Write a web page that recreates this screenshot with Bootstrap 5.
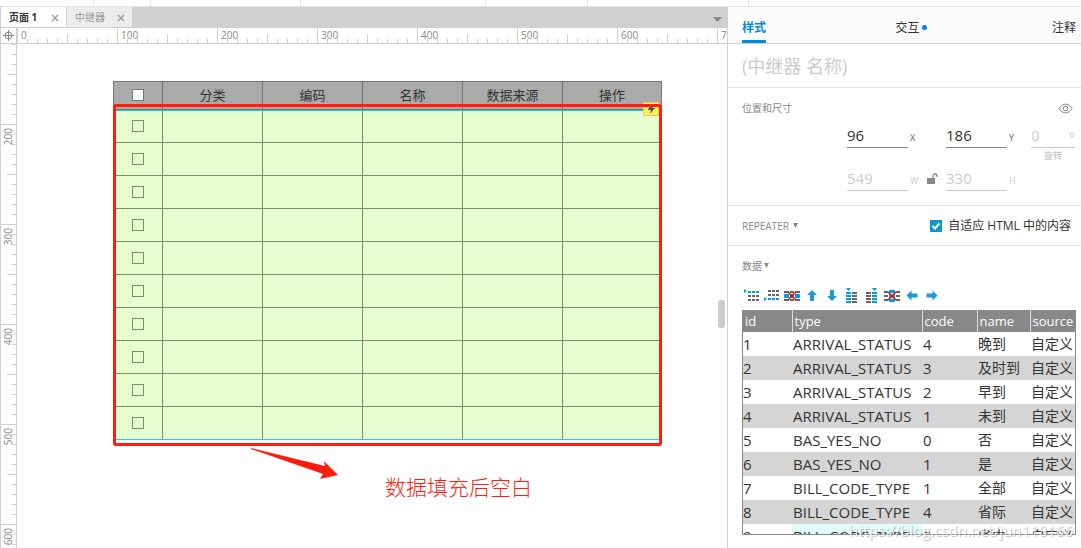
<!DOCTYPE html>
<html lang="zh-CN">
<head>
<meta charset="utf-8">
<meta name="viewport" content="width=device-width, initial-scale=1">
<title>页面 1</title>
<link href="https://cdn.jsdelivr.net/npm/bootstrap@5.3.0/dist/css/bootstrap.min.css" rel="stylesheet">
<script src="https://cdn.jsdelivr.net/npm/bootstrap@5.3.0/dist/js/bootstrap.bundle.min.js" defer></script>
<style>
  :root { --rule: #d0d0d0; --soft: #e5e5e5; --accent: #0089dd; --pen: #ff1d12; }
  body { font-family: "Open Sans", "Noto Sans CJK SC", sans-serif; font-size: 12px; line-height: 16px; color: #333; background: #fff; }
  input[type=checkbox] { appearance: none; display: block; margin: 0; border-radius: 0; }
  input::placeholder { color: #ccc; }

  .toolstrip { height: 7px; border-bottom: 1px solid var(--soft); }
  .toolstrip span { border-right: 1px solid var(--soft); }
  .g1 { width: 94px; } .g2 { width: 57px; } .g3 { width: 150px; } .g4 { width: 185px; } .g5 { width: 102px; } .g6 { width: 161px; }

  .doc-tabs { height: 21px; background: var(--rule); padding-left: 1px; }
  .doc-tab { width: 66px; height: 20px; padding: 0 6px 0 8px; font-size: 10px; border-right: 1px solid var(--rule); background: #ececec; color: #999; }
  .doc-tab.active { background: #fff; color: #333; font-weight: 700; }
  .doc-tab button, .tab-menu { line-height: 0; }
  .tab-menu { width: 20px; padding-top: 4px; }

  .ruler-row { height: 16px; border-bottom: 1px solid var(--rule); }
  .origin { width: 17px; border: solid var(--rule); border-width: 0 1px; }
  .hruler, .vruler { font-size: 10px; line-height: 15px; color: #888; }
  .hseg { flex: 0 0 100px; padding-left: 4px;
    background:
      linear-gradient(var(--rule), var(--rule)) 0 0 / 1px 100% no-repeat,
      linear-gradient(var(--rule), var(--rule)) 50px 100% / 1px 9px no-repeat,
      repeating-linear-gradient(90deg, var(--rule) 0 1px, transparent 1px 10px) 0 100% / 100% 4px no-repeat; }
  .vruler { width: 17px; border: solid var(--rule); border-width: 0 1px; }
  .vseg { flex: 0 0 100px; padding-top: 4px;
    background:
      linear-gradient(var(--rule), var(--rule)) 0 0 / 100% 1px no-repeat,
      linear-gradient(var(--rule), var(--rule)) 100% 50px / 9px 1px no-repeat,
      repeating-linear-gradient(var(--rule) 0 1px, transparent 1px 10px) 100% 0 / 4px 100% no-repeat; }
  .vseg.first { flex-basis: 80px; background-position: 0 -20px, 100% 30px, 100% 0; }
  .vseg span { display: block; writing-mode: vertical-rl; transform: rotate(180deg); width: 15px; }

  .stage { padding: 37px 0 0 96px; }
  .widget { width: 549px; height: 365px; }
  .grid-table { width: 549px; table-layout: fixed; border-collapse: collapse; font-size: 13px; }
  .grid-table th { height: 28px; padding: 0 0 2px; background: #aaa; border: 1px solid #777; font-weight: 400; text-align: center; }
  .grid-table td { height: 33px; padding: 0; background: #e5fdcf; border: 1px solid #7a9165; }
  .grid-table tbody tr:first-child td { border-top-color: #777; box-shadow: inset 0 1px #00d8e0; }
  .grid-table tbody tr:last-child td { border-bottom-color: #20d0d8; }
  .grid-table input { width: 12px; height: 12px; margin: 0 auto; border: 1px solid #7a9165; }
  .grid-table th input { border-color: #777; background: #fff; }
  .col-check { width: 49px; } .col-data { width: 100px; }
  .marker { inset: 23px 0 0 0; border: 3px solid var(--pen); border-radius: 3px; }
  .event-flag { top: 21px; right: 3px; line-height: 0; }
  .note { padding-left: 137px; }
  .note-text { color: var(--pen); font-size: 21px; line-height: 32px; font-weight: 300; margin: 25px 0 0 46px; }
  .grip { right: 2px; top: 293px; width: 7px; height: 28px; border-radius: 3px; background: #ccc; }

  .inspector { flex: 0 0 354px; border-left: 1px solid var(--rule); }
  .side-tabs { height: 37px; padding: 0 5px 0 14px; background: #fbfbfb; border-bottom: 1px solid var(--rule); }
  .side-tabs a { color: #333; text-decoration: none; padding-top: 13px; border-bottom: 3px solid transparent; }
  .side-tabs a.active { color: var(--accent); font-weight: 700; border-color: var(--accent); }
  .dot { width: 5px; height: 5px; background: var(--accent); margin: 5px 0 0 2px; }
  .name-row { height: 44px; padding: 0 14px; border-bottom: 1px solid var(--soft); }
  .name-row input { border: 0; outline: 0; padding: 0; font-size: 18px; }
  .sect { padding: 0 6px 0 14px; border-bottom: 1px solid var(--soft); color: #888; font-size: 10px; }
  .geometry { height: 118px; padding-top: 12px; }
  .eye { margin-right: 2px; }
  .fields { display: grid; grid-template-columns: 61px 38px 61px 24px 44px; justify-content: end; }
  .fields input { width: 100%; height: 24px; padding: 0 0 2px; border: 0; border-bottom: 1px solid #888; border-radius: 0; font-size: 15px; color: #333; outline: 0; background: none; }
  .fields input:disabled { color: #ccc; border-color: #ccc; }
  .fields label { font-size: 9px; padding: 6px 0 0 2px; color: #666; }
  .fields .off { color: #ccc; }
  .unit { right: 0; top: 6px; font-size: 14px; color: #ccc; }
  .fields .spin { grid-column: 5; height: 19px; padding: 0; color: #bbb; }
  .repeater { height: 40px; }
  .toggle { background: none; border: 0; padding: 0; color: #888; font-size: 10px; line-height: 14px; }
  .toggle svg { margin-left: 2px; vertical-align: 2px; }
  .fit input { width: 12px; height: 12px; background: #0b9ac3 url("data:image/svg+xml,%3Csvg xmlns='http://www.w3.org/2000/svg' viewBox='0 0 12 12'%3E%3Cpath d='M2.5 6l2.5 2.5 4.500-5' fill='none' stroke='%23fff' stroke-width='2'/%3E%3C/svg%3E"); margin-right: 6px; }
  .fit { font-size: 12px; color: #333; margin-right: 4px; }
  .data-tools { padding: 15px 2px 6px; gap: 4px; }
  .data-tools button { width: 16px; height: 16px; padding: 0; border: 0; background: none; line-height: 0; }
  .data-sect { padding: 13px 5px 0 14px; }
  .data-box { height: 225px; border: 1px solid #888; border-top: 0; }
  .data-table { width: 100%; table-layout: fixed; border-collapse: collapse; font-size: 15px; line-height: 24px; white-space: nowrap; }
  .data-table th { height: 22px; padding: 0 0 0 2px; background: #888; color: #fff; font-weight: 400; font-size: 13px; line-height: 22px; border-left: 1px solid #ddd; }
  .data-table th:first-child { border-left: 0; }
  .data-table td { height: 24px; padding: 0 0 0 1px; }
  .data-table td:first-child { padding-left: 0; }
  .data-table td:nth-child(n+4) { font-size: 14px; }
  .data-table tbody tr:nth-child(even) { background: #d5d5d5; }
  .data-table .picked { background: #e0fcfc; }
  .w-id { width: 49px; } .w-type { width: 130px; } .w-code { width: 55px; } .w-name { width: 53px; }
  .watermark { right: 8px; bottom: 8px; font-size: 15px; line-height: 20px; color: rgba(255,255,255,.75); text-shadow: 1px 1px 1px rgba(120,120,120,.5); }
</style>
</head>
<body>
<svg class="d-none">
  <defs>
    <path id="up" d="M8 2l5 5h-3v6H6V7H3z"/>
  </defs>
</svg>
<div class="vh-100 d-flex flex-column overflow-hidden">
  <div class="toolstrip d-flex flex-shrink-0"><span class="g1"></span><span class="g2"></span><span class="g3"></span><span class="g4"></span><span class="g5"></span><span class="g6"></span></div>
  <div class="d-flex flex-grow-1 overflow-hidden">

    <main class="d-flex flex-column flex-grow-1 overflow-hidden position-relative">
      <nav class="doc-tabs d-flex flex-shrink-0">
        <div class="doc-tab active d-flex align-items-center justify-content-between"><span>页面 1</span><button class="btn p-0 border-0" aria-label="关闭"><svg width="9" height="9" stroke="#999" stroke-width="1.300"><path d="M1 2l6 6M7 2L1 8"/></svg></button></div>
        <div class="doc-tab d-flex align-items-center justify-content-between"><span>中继器</span><button class="btn p-0 border-0" aria-label="关闭"><svg width="9" height="9" stroke="#999" stroke-width="1.300"><path d="M1 2l6 6M7 2L1 8"/></svg></button></div>
        <button class="tab-menu btn px-0 pb-0 border-0 ms-auto" aria-label="标签列表"><svg width="9" height="5" fill="#888"><path d="M0 0h9L4.500 5z"/></svg></button>
      </nav>
      <div class="ruler-row d-flex flex-shrink-0">
        <div class="origin flex-shrink-0 d-flex align-items-center justify-content-center"><svg width="11" height="11" fill="none" stroke="#888"><circle cx="5.500" cy="5.500" r="3.500"/><path d="M5.500 0v11M0 5.500h11"/></svg></div>
        <div class="hruler d-flex flex-grow-1 overflow-hidden"><div class="hseg">0</div><div class="hseg">100</div><div class="hseg">200</div><div class="hseg">300</div><div class="hseg">400</div><div class="hseg">500</div><div class="hseg">600</div><div class="hseg">700</div></div>
      </div>
      <div class="d-flex flex-grow-1 overflow-hidden">
        <div class="vruler d-flex flex-column flex-shrink-0 overflow-hidden"><div class="vseg first"></div><div class="vseg"><span>200</span></div><div class="vseg"><span>300</span></div><div class="vseg"><span>400</span></div><div class="vseg"><span>500</span></div><div class="vseg"><span>600</span></div></div>
        <div class="stage flex-grow-1">
          <div class="widget position-relative">
            <table class="grid-table">
              <colgroup><col class="col-check"><col class="col-data"><col class="col-data"><col class="col-data"><col class="col-data"><col></colgroup>
              <thead><tr><th><input type="checkbox" aria-label="全选"></th><th>分类</th><th>编码</th><th>名称</th><th>数据来源</th><th>操作</th></tr></thead>
              <tbody>
                <tr><td><input type="checkbox" aria-label="1"></td><td></td><td></td><td></td><td></td><td></td></tr>
                <tr><td><input type="checkbox" aria-label="2"></td><td></td><td></td><td></td><td></td><td></td></tr>
                <tr><td><input type="checkbox" aria-label="3"></td><td></td><td></td><td></td><td></td><td></td></tr>
                <tr><td><input type="checkbox" aria-label="4"></td><td></td><td></td><td></td><td></td><td></td></tr>
                <tr><td><input type="checkbox" aria-label="5"></td><td></td><td></td><td></td><td></td><td></td></tr>
                <tr><td><input type="checkbox" aria-label="6"></td><td></td><td></td><td></td><td></td><td></td></tr>
                <tr><td><input type="checkbox" aria-label="7"></td><td></td><td></td><td></td><td></td><td></td></tr>
                <tr><td><input type="checkbox" aria-label="8"></td><td></td><td></td><td></td><td></td><td></td></tr>
                <tr><td><input type="checkbox" aria-label="9"></td><td></td><td></td><td></td><td></td><td></td></tr>
                <tr><td><input type="checkbox" aria-label="10"></td><td></td><td></td><td></td><td></td><td></td></tr>
              </tbody>
            </table>
            <div class="event-flag position-absolute"><svg width="16" height="14"><path d="M.5.5h15v13H.5z" fill="#fff34d" stroke="#d0d080"/><path d="M7 3h4L9.500 6H12l-5 6 1-4H5z" fill="#555"/></svg></div>
            <div class="marker position-absolute"></div>
          </div>
          <div class="note d-flex align-items-start">
            <svg width="89" height="36" fill="#ff1d12"><path d="M1 2l74 18-1-5 14 14-18 4 3-5L1 3z"/></svg>
            <p class="note-text">数据填充后空白</p>
          </div>
        </div>
      </div>
      <div class="grip position-absolute"></div>
    </main>

    <aside class="inspector">
      <nav class="side-tabs d-flex justify-content-between">
        <a href="#" class="active">样式</a>
        <a href="#" class="d-flex ps-1"><span>交互</span><span class="dot rounded-circle"></span></a>
        <a href="#">注释</a>
      </nav>
      <div class="name-row d-flex align-items-center"><input class="w-100" type="text" placeholder="(中继器 名称)" aria-label="名称"></div>
      <section class="sect geometry">
        <div class="d-flex justify-content-between align-items-center">
          <span>位置和尺寸</span>
          <svg class="eye" width="15" height="11" viewBox="0 0 15 11" fill="none" stroke="#888"><path d="M.7 5.500Q7.500-3.500 14.300 5.500 7.500 14.500.7 5.500z"/><circle cx="7.500" cy="5.500" r="2.300"/></svg>
        </div>
        <div class="fields mt-2">
          <input id="fx" type="text" value="96"><label for="fx">X</label>
          <input id="fy" type="text" value="186"><label for="fy">Y</label>
          <div class="position-relative"><input id="fr" type="text" value="0" disabled><span class="unit position-absolute">°</span></div>
        </div>
        <div class="fields"><label class="spin text-center" for="fr">旋转</label></div>
        <div class="fields">
          <input id="fw" type="text" value="549" disabled><label class="off d-flex justify-content-between" for="fw">W<svg class="me-2" width="12" height="12" fill="#888"><path d="M1 5h8v6H1z"/><path d="M7 5V3a2 2 0 0 1 4 0v1" fill="none" stroke="#888" stroke-width="1.300"/></svg></label>
          <input id="fh" type="text" value="330" disabled><label class="off" for="fh">H</label><span></span>
        </div>
      </section>
      <section class="sect repeater d-flex justify-content-between align-items-center">
        <button class="toggle">REPEATER <svg width="5" height="5" fill="#888"><path d="M0 0h5L2.500 5z"/></svg></button>
        <label class="fit d-flex align-items-center"><input type="checkbox" checked>自适应 HTML 中的内容</label>
      </section>
      <section class="data-sect">
        <button class="toggle d-block">数据<svg width="5" height="5" fill="#888"><path d="M0 0h5L2.500 5z"/></svg></button>
        <div class="data-tools d-flex">
          <button aria-label="在上方插入行"><svg width="16" height="16"><path d="M0 1l3 2-3 2zM4 3h3v2H4zM8 3h3v2H8zM12 3h3v2h-3z" fill="#009ee0"/><path d="M4 7h3v2H4zM8 7h3v2H8zM12 7h3v2h-3zM4 11h3v2H4zM8 11h3v2H8zM12 11h3v2h-3z" fill="#666"/></svg></button>
          <button aria-label="在下方插入行"><svg width="16" height="16"><path d="M0 9l3 2-3 2zM4 10h3v2H4zM8 10h3v2H8zM12 10h3v2h-3z" fill="#009ee0"/><path d="M4 2h3v2H4zM8 2h3v2H8zM12 2h3v2h-3zM4 6h3v2H4zM8 6h3v2H8zM12 6h3v2h-3z" fill="#666"/></svg></button>
          <button aria-label="删除行"><svg width="16" height="16"><path d="M0 3h5v2H0zM6 3h4v2H6zM11 3h5v2h-5zM0 11h5v2H0zM6 11h4v2H6zM11 11h5v2h-5z" fill="#666"/><path d="M0 6h5v4H0zM6 6h4v4H6zM11 6h5v4h-5z" fill="#009ee0"/><path d="M4 4l8 8M12 4l-8 8" stroke="#e81010" stroke-width="1.500"/></svg></button>
          <button aria-label="上移"><svg width="16" height="16" fill="#1a9ad8"><use href="#up"/></svg></button>
          <button aria-label="下移"><svg width="16" height="16" fill="#1a9ad8"><use href="#up" transform="rotate(180 8 7.500)"/></svg></button>
          <button aria-label="在左侧插入列"><svg width="16" height="16"><path d="M2 0h5L4.500 3zM2 4h5v2H2zM2 7h5v2H2zM2 10h5v2H2zM2 13h5v2H2z" fill="#009ee0"/><path d="M8 4h5v2H8zM8 7h5v2H8zM8 10h5v2H8zM8 13h5v2H8z" fill="#666"/></svg></button>
          <button aria-label="在右侧插入列"><svg width="16" height="16"><path d="M8 0h5l-2.500 3zM8 4h5v2H8zM8 7h5v2H8zM8 10h5v2H8zM8 13h5v2H8z" fill="#009ee0"/><path d="M2 4h5v2H2zM2 7h5v2H2zM2 10h5v2H2zM2 13h5v2H2z" fill="#666"/></svg></button>
          <button aria-label="删除列"><svg width="16" height="16"><path d="M0 3h4v2H0zM0 7h4v2H0zM0 11h4v2H0zM12 3h4v2h-4zM12 7h4v2h-4zM12 11h4v2h-4z" fill="#666"/><path d="M5 2h6v3H5zM5 6h6v4H5zM5 11h6v3H5z" fill="#009ee0"/><path d="M4 4l8 8M12 4l-8 8" stroke="#e81010" stroke-width="1.500"/></svg></button>
          <button aria-label="左移"><svg width="16" height="16" fill="#1a9ad8"><use href="#up" transform="rotate(-90 8 7.500)"/></svg></button>
          <button aria-label="右移"><svg width="16" height="16" fill="#1a9ad8"><use href="#up" transform="rotate(90 8 7.500)"/></svg></button>
        </div>
        <div class="data-box overflow-hidden">
          <table class="data-table">
            <colgroup><col class="w-id"><col class="w-type"><col class="w-code"><col class="w-name"><col></colgroup>
            <thead><tr><th>id</th><th>type</th><th>code</th><th>name</th><th>source</th></tr></thead>
            <tbody>
              <tr><td>1</td><td>ARRIVAL_STATUS</td><td>4</td><td>晚到</td><td>自定义</td></tr>
              <tr><td>2</td><td>ARRIVAL_STATUS</td><td>3</td><td>及时到</td><td>自定义</td></tr>
              <tr><td>3</td><td>ARRIVAL_STATUS</td><td>2</td><td>早到</td><td>自定义</td></tr>
              <tr><td>4</td><td>ARRIVAL_STATUS</td><td>1</td><td>未到</td><td>自定义</td></tr>
              <tr><td>5</td><td>BAS_YES_NO</td><td>0</td><td>否</td><td>自定义</td></tr>
              <tr><td>6</td><td>BAS_YES_NO</td><td>1</td><td>是</td><td>自定义</td></tr>
              <tr><td>7</td><td>BILL_CODE_TYPE</td><td>1</td><td>全部</td><td>自定义</td></tr>
              <tr><td>8</td><td>BILL_CODE_TYPE</td><td>4</td><td>省际</td><td>自定义</td></tr>
              <tr><td>9</td><td class="picked">BILL_CODE_TYPE</td><td>5</td><td>省内</td><td>自定义</td></tr>
            </tbody>
          </table>
        </div>
      </section>
    </aside>
  </div>
</div>
<div class="watermark position-fixed">https://blog.csdn.net/jun118166</div>
</body>
</html>
